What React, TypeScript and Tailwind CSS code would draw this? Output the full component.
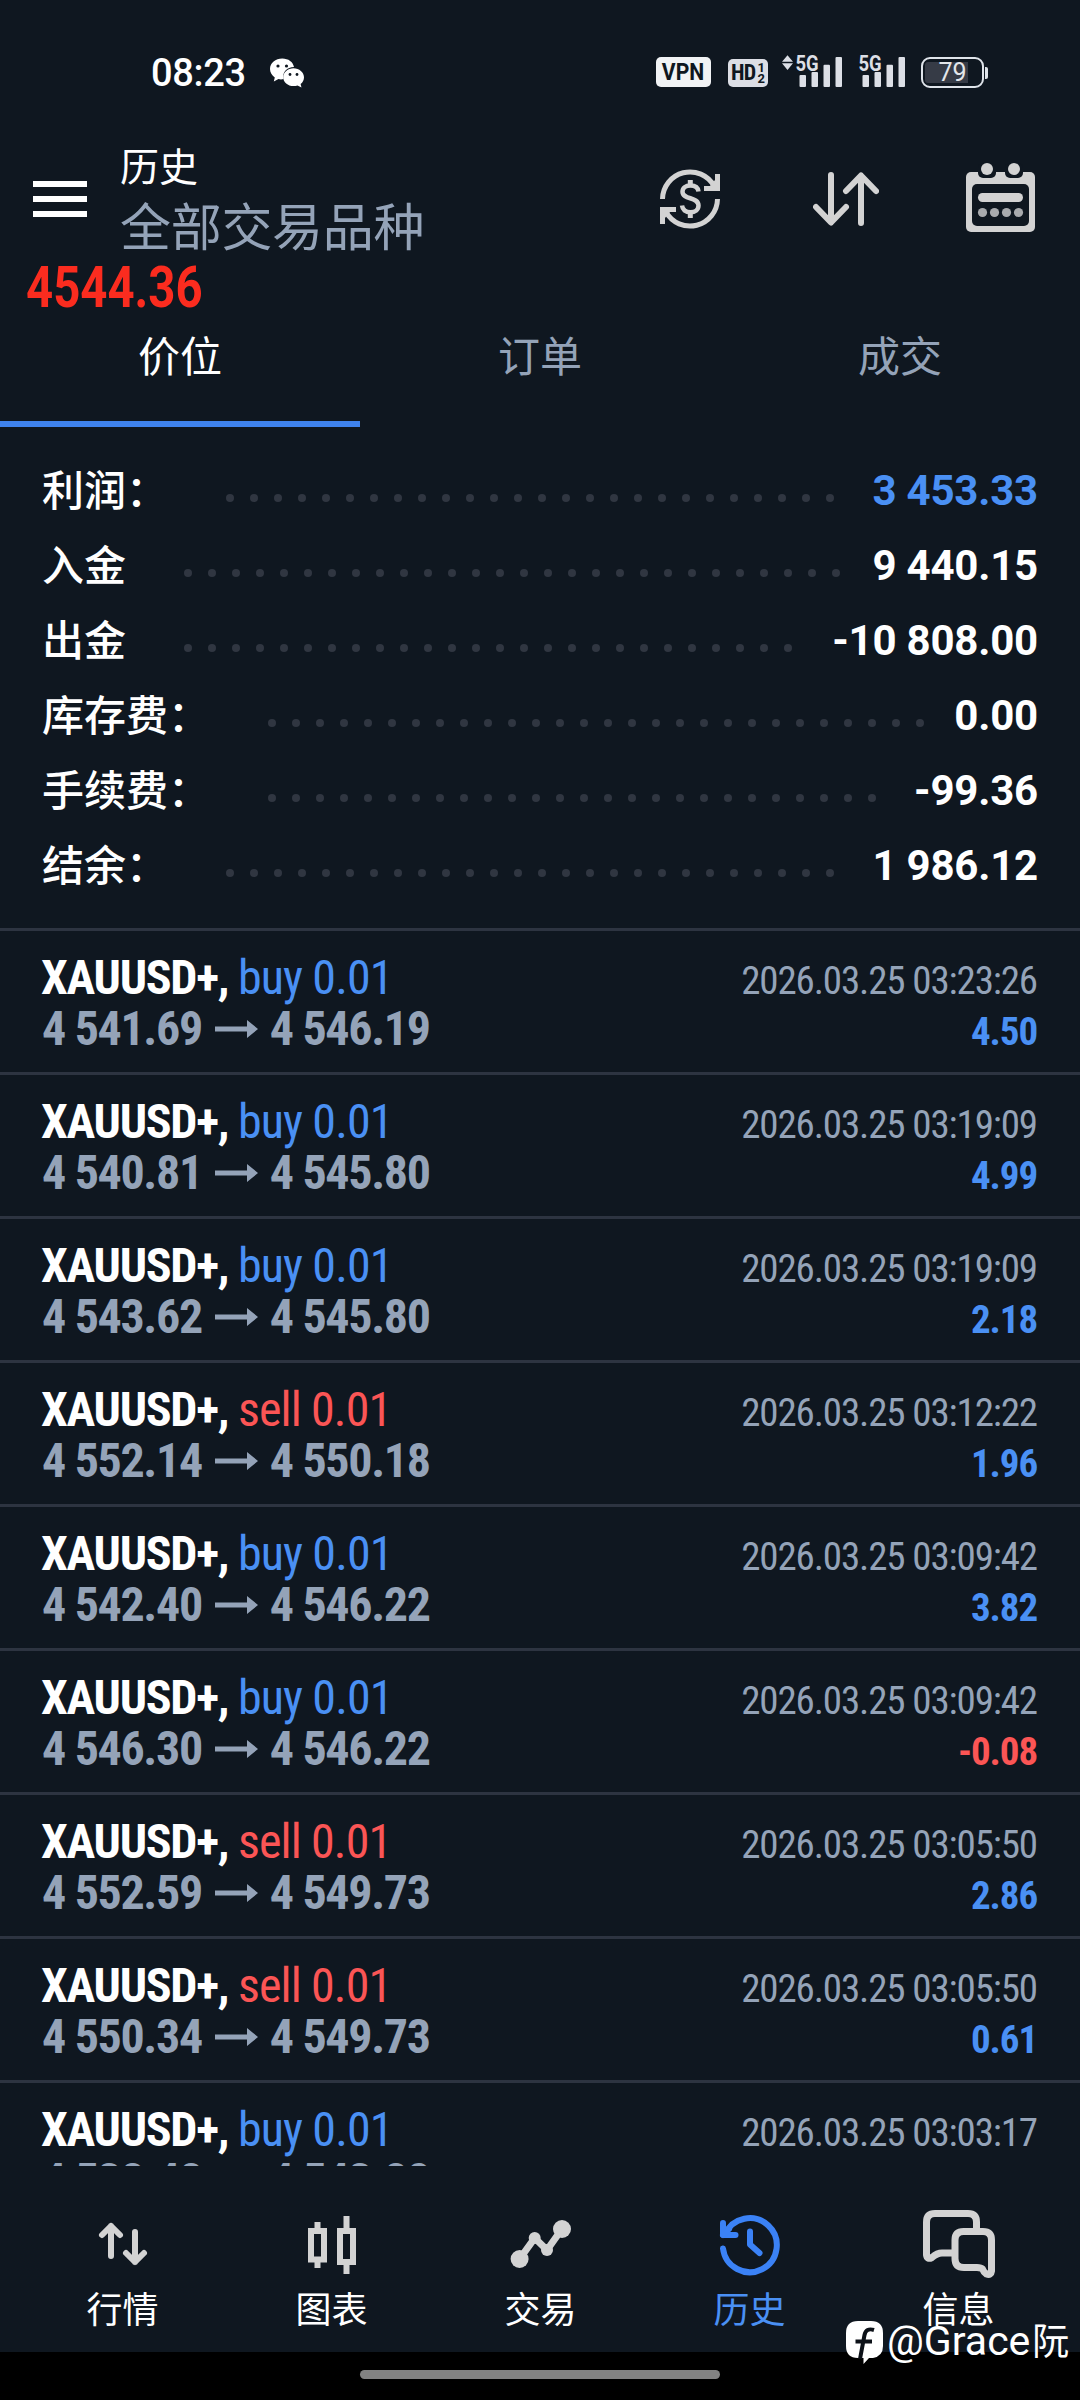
import React from 'react';
import { clsx } from 'clsx';

interface Deal {
  side: 'buy' | 'sell';
  open: string;
  close: string;
  time: string;
  profit: string;
}

interface SummaryItem {
  label: string;
  value: string;
  dots: number;
  highlight?: boolean;
}

const summary: SummaryItem[] = [
  { label: '利润：', value: '3 453.33', dots: 26, highlight: true },
  { label: '入金', value: '9 440.15', dots: 28 },
  { label: '出金', value: '-10 808.00', dots: 26 },
  { label: '库存费：', value: '0.00', dots: 28 },
  { label: '手续费：', value: '-99.36', dots: 26 },
  { label: '结余：', value: '1 986.12', dots: 26 }
];

const deals: Deal[] = [
  { side: 'buy', open: '4 541.69', close: '4 546.19', time: '2026.03.25 03:23:26', profit: '4.50' },
  { side: 'buy', open: '4 540.81', close: '4 545.80', time: '2026.03.25 03:19:09', profit: '4.99' },
  { side: 'buy', open: '4 543.62', close: '4 545.80', time: '2026.03.25 03:19:09', profit: '2.18' },
  { side: 'sell', open: '4 552.14', close: '4 550.18', time: '2026.03.25 03:12:22', profit: '1.96' },
  { side: 'buy', open: '4 542.40', close: '4 546.22', time: '2026.03.25 03:09:42', profit: '3.82' },
  { side: 'buy', open: '4 546.30', close: '4 546.22', time: '2026.03.25 03:09:42', profit: '-0.08' },
  { side: 'sell', open: '4 552.59', close: '4 549.73', time: '2026.03.25 03:05:50', profit: '2.86' },
  { side: 'sell', open: '4 550.34', close: '4 549.73', time: '2026.03.25 03:05:50', profit: '0.61' },
  { side: 'buy', open: '4 538.48', close: '4 543.82', time: '2026.03.25 03:03:17', profit: '5.34' }
];

const Signal: React.FC<{ arrows?: boolean }> = ({ arrows }) => (
  <div className={clsx('relative h-8 shrink-0', arrows ? 'w-[60px]' : 'w-[44px]')}>
    <svg className="absolute right-0 top-0" width="60" height="32" viewBox="0 0 60 32" fill="#dcdfe6">
      {arrows && <path d="M0 6.7 L5.5 0.3 L11 6.7 Z M0 8.3 L5.5 15 L11 8.3 Z" />}
      <rect x="17.5" y="20" width="6.5" height="12" rx="1" />
      <rect x="29.5" y="17" width="6.5" height="15" rx="1" />
      <rect x="41.5" y="9.7" width="6.5" height="22.3" rx="1" />
      <rect x="53.5" y="2" width="6.5" height="30" rx="1" />
    </svg>
    <span className="absolute right-[23.5px] top-[1px] origin-right scale-x-[0.84] text-[22px] leading-[15px] font-bold text-[#dcdfe6]">
      5G
    </span>
  </div>
);

const StatusBar = () => (
  <div className="flex h-[144px] shrink-0 items-start pl-[151px]">
    <span className="mt-[51px] w-[119px] text-[38px] leading-[44px] font-medium tracking-[-0.3px] text-white">08:23</span>
    <svg className="mt-[58px]" width="35" height="30" viewBox="0 0 35 30">
      <path
        d="M12.3 0.5 C5.5 0.5 0 5 0 11 C0 14.5 2 17.5 4.8 19.5 L3.8 23.5 L8.5 21 C10 21.5 12 21.5 13.5 21 C12 14 17 9 24 9 C23 4 18.5 0.5 12.3 0.5 Z"
        fill="#fff"
      />
      <path
        d="M23.5 10.2 C17.8 10.2 13.2 14.2 13.2 19.2 C13.2 24.2 17.8 28 23.5 28 C25 28 26.3 27.8 27.5 27.4 L31.5 29.5 L30.6 26 C32.8 24.3 34 22 34 19.2 C34 14.2 29.2 10.2 23.5 10.2 Z"
        fill="#fff"
      />
      <g fill="#0f1720">
        <circle cx="8" cy="8" r="1.6" />
        <circle cx="16.5" cy="8" r="1.6" />
        <circle cx="20" cy="16.5" r="1.4" />
        <circle cx="27" cy="16.5" r="1.4" />
      </g>
    </svg>
    <div className="mt-[57px] ml-[351px] flex h-[30px] w-[55px] items-center justify-center rounded-[5px] bg-[#f1f3f5] text-[23px] leading-none font-bold text-[#0f1720]">
      <span className="scale-x-[0.92]">VPN</span>
    </div>
    <div className="mt-[59px] ml-[17px] flex h-[28px] w-[40px] items-center justify-center rounded-[5px] bg-[#dcdee5] text-[#0f1720]">
      <span className="text-[22px] leading-[28px] font-bold tracking-[-0.8px] [font-stretch:75%]">HD</span>
      <span className="ml-[2px] flex flex-col text-[13px] leading-[11px] font-bold">
        <span>1</span>
        <span>2</span>
      </span>
    </div>
    <div className="mt-[55px] ml-[14px]">
      <Signal arrows />
    </div>
    <div className="mt-[55px] ml-[19px]">
      <Signal />
    </div>
    <div className="relative mt-[57px] ml-[16px] flex h-[31px] w-[63px] items-center justify-center rounded-[9px] border-2 border-[#dfe4ea]">
      <div className="absolute top-[3px] left-[2px] h-[21px] w-[43px] rounded-l-[3px] bg-[#363b46]" />
      <span className="relative text-[25px] leading-none text-[#e3e6ea]">79</span>
    </div>
    <div className="mt-[67px] ml-[1px] h-[12px] w-[3px] rounded-r-[2px] bg-[#dfe4ea]" />
  </div>
);

const CurrencyIcon = () => (
  <svg width="60" height="60" viewBox="0 0 60 60" fill="none" stroke="#d3d3d3" strokeWidth="5">
    <path d="M2.5 30 A27.5 27.5 0 0 1 54 17" />
    <path d="M57.5 30 A27.5 27.5 0 0 1 6 43" />
    <path d="M60 5 V22 H44 V17 H50 L55 11 V5 Z" fill="#d3d3d3" stroke="none" />
    <path d="M0 55 V38 H16 V43 H10 L5 49 V55 Z" fill="#d3d3d3" stroke="none" />
    <path
      d="M38.5 22.5 C38 18.5 35 16.5 30.5 16.5 C25.5 16.5 22.5 19 22.5 22.7 C22.5 31 38.5 27.5 38.5 36.5 C38.5 40.5 35 43.3 30.5 43.3 C25.5 43.3 22.5 40.5 22 36.5"
      strokeWidth="4.5"
    />
    <path d="M30.3 11 V17 M30.3 43 V49" />
  </svg>
);

const SortIcon = () => (
  <svg
    width="66"
    height="54"
    viewBox="0 0 66 54"
    fill="none"
    stroke="#d3d3d3"
    strokeWidth="6"
    strokeLinecap="round"
    strokeLinejoin="round"
  >
    <path d="M18 3 V50 M3 35 L18 50.5 L33 35" />
    <path d="M48 51 V4 M33 19 L48 3.5 L63 19" />
  </svg>
);

const CalendarIcon = () => (
  <svg width="69" height="69" viewBox="0 0 69 69">
    <rect x="0" y="9" width="69" height="60" rx="5" fill="#d3d3d3" />
    <rect x="12" y="0" width="18" height="15" rx="5" fill="#0f1720" />
    <rect x="39" y="0" width="18" height="15" rx="5" fill="#0f1720" />
    <circle cx="21" cy="6" r="6" fill="#d3d3d3" />
    <circle cx="48" cy="6" r="6" fill="#d3d3d3" />
    <rect x="6" y="21" width="57" height="42" rx="5" fill="#0f1720" />
    <rect x="12" y="30" width="45" height="9" rx="4.5" fill="#d3d3d3" />
    <g fill="#a9abae">
      <circle cx="16.5" cy="49.5" r="4.6" />
      <circle cx="28.5" cy="49.5" r="4.6" />
      <circle cx="40.5" cy="49.5" r="4.6" />
      <circle cx="52.5" cy="49.5" r="4.6" />
    </g>
  </svg>
);

const Header = () => (
  <header className="flex h-[174px] shrink-0 items-start pl-[33px]">
    <div className="mt-[37px] flex w-[54px] flex-col gap-[9px]">
      <div className="h-[6px] bg-white" />
      <div className="h-[6px] bg-white" />
      <div className="h-[6px] bg-white" />
    </div>
    <div className="relative ml-[33px] w-[540px] pt-[1px]">
      <div className="text-[39px] leading-[46px] text-white">历史</div>
      <div className="mt-[8px] text-[51px] leading-[60px] tracking-[-0.3px] text-[#94a3b8]">全部交易品种</div>
      {/* live quote floats under the menu button */}
      <div className="absolute top-[120px] left-[-94px] origin-left scale-x-[0.83] text-[57px] leading-[48px] font-bold text-[#fb2c1f]">
        4544.36
      </div>
    </div>
    <div className="mt-[25px]">
      <CurrencyIcon />
    </div>
    <div className="mt-[28px] ml-[93px]">
      <SortIcon />
    </div>
    <div className="mt-[19px] ml-[87px]">
      <CalendarIcon />
    </div>
  </header>
);

const Tabs = () => (
  <div className="grid h-[109px] shrink-0 grid-cols-3 text-center text-[42px] text-[#94a3b8]">
    <div className="border-b-[6px] border-[#3f83ee] pt-[10px] leading-[60px] text-white">价位</div>
    <div className="pt-[10px] leading-[60px]">订单</div>
    <div className="pt-[10px] leading-[60px]">成交</div>
  </div>
);

const Summary = () => (
  <section className="h-[501px] shrink-0 px-[42px] pt-[26px]">
    {summary.map((item) => (
      <div key={item.label} className="flex h-[75px] items-center text-[42px] text-white">
        <span className="mt-[2px] font-medium">{item.label}</span>
        <div className="mt-[15px] ml-[58px] flex gap-4">
          {Array.from({ length: item.dots }, (_, i) => (
            <span key={i} className="size-2 rounded-full bg-[#303641]" />
          ))}
        </div>
        <span className={clsx('ml-auto font-bold tracking-[-0.2px]', item.highlight && 'text-[#4a90f4]')}>
          {item.value}
        </span>
      </div>
    ))}
  </section>
);

const DealRow: React.FC<{ deal: Deal }> = ({ deal }) => (
  <div className="h-[144px] shrink-0 border-t-[3px] border-[#2d3441] pt-[21px] pr-[43px] pl-[41px] whitespace-nowrap [font-stretch:75%]">
    <div className="flex h-[51px] items-baseline justify-between leading-[51px]">
      <div className="text-[48px]">
        <span className="font-bold tracking-[-0.027em] text-white">XAUUSD+, </span>
        <span className={clsx('tracking-[-0.018em]', deal.side === 'buy' ? 'text-[#4a90f4]' : 'text-[#fb5555]')}>
          {deal.side} 0.01
        </span>
      </div>
      <span className="text-[39px] tracking-[-0.029em] text-[#94a3b8]">{deal.time}</span>
    </div>
    <div className="flex h-[51px] items-baseline justify-between pl-px leading-[51px] font-bold">
      <div className="text-[48px] tracking-[-0.028em] text-[#94a3b8]">
        {deal.open}
        <svg className="mr-[12px] ml-[13px] inline-block align-[7px]" width="43" height="18" viewBox="0 0 43 18" fill="#94a3b8">
          <path d="M0 6.5 H32 V0 L43 9 L32 18 V11.5 H0 Z" />
        </svg>
        {deal.close}
      </div>
      <span
        className={clsx(
          'text-[39px] tracking-[-0.028em]',
          deal.profit.startsWith('-') ? 'text-[#fb5555]' : 'text-[#4a90f4]'
        )}
      >
        {deal.profit}
      </span>
    </div>
  </div>
);

const QuotesIcon = () => (
  <svg
    width="72"
    height="72"
    viewBox="86 2208 72 72"
    fill="none"
    stroke="#d3d3d3"
    strokeWidth="6"
    strokeLinecap="round"
    strokeLinejoin="round"
  >
    <path d="M110 2226 V2256 M101 2235 L110 2226 L119 2235" />
    <path d="M134 2232 V2262 M125 2253 L134 2262 L143 2253" />
  </svg>
);

const ChartIcon = () => (
  <svg width="72" height="72" viewBox="295 2208 72 72" fill="none" stroke="#d3d3d3" strokeWidth="6">
    <path d="M310 2231 H323 V2259.5 H310 Z M316.5 2222 V2231 M316.5 2259 V2268" />
    <path d="M339 2231 H352 V2262 H339 Z M345.5 2216 V2231 M345.5 2262 V2274" />
  </svg>
);

const TradeIcon = () => (
  <svg width="72" height="72" viewBox="504 2208 72 72" fill="#d3d3d3">
    <path d="M518.6 2259 L533.7 2238 L546 2250 L561 2229" fill="none" stroke="#d3d3d3" strokeWidth="7" />
    <circle cx="518.6" cy="2259" r="9" />
    <circle cx="533.7" cy="2238" r="6" />
    <circle cx="546" cy="2250" r="6" />
    <circle cx="561" cy="2229" r="9" />
  </svg>
);

const HistoryIcon = () => (
  <svg
    width="72"
    height="72"
    viewBox="713 2208 72 72"
    fill="none"
    stroke="#3b82f6"
    strokeWidth="6"
    strokeLinecap="round"
    strokeLinejoin="round"
  >
    <path d="M722 2248.5 A27 27 0 1 0 724 2234.5" />
    <path d="M722 2223 V2235 H734.5" />
    <path d="M722 2235 L728 2229" />
    <path d="M749 2231.5 V2244.5 L758.5 2253" />
  </svg>
);

const MessagesIcon = () => (
  <svg width="72" height="72" viewBox="922 2208 72 72" fill="none" stroke="#d3d3d3" strokeWidth="7" strokeLinejoin="round">
    <path d="M975.5 2229 V2222 Q975.5 2213.5 967 2213.5 H934 Q925.5 2213.5 925.5 2222 V2255 Q926 2260 931 2257.5 Q936 2253 941 2253 H951" />
    <path d="M962.5 2231.5 H982 Q990.5 2231.5 990.5 2240 V2271 Q990 2275.5 985.5 2274 Q982.5 2272 981.5 2269 Q980 2267.5 976 2267.5 H963 Q954 2267.5 954 2258.5 V2240 Q954 2231.5 962.5 2231.5 Z" />
  </svg>
);

const navItems = [
  { label: '行情', icon: QuotesIcon },
  { label: '图表', icon: ChartIcon },
  { label: '交易', icon: TradeIcon },
  { label: '历史', icon: HistoryIcon, active: true },
  { label: '信息', icon: MessagesIcon }
];

const BottomNav = () => (
  <nav className="grid h-[186px] shrink-0 grid-cols-5 pt-[42px] pr-[17px] pl-[18px]">
    {navItems.map(({ label, icon: Icon, active }) => (
      <div key={label} className="flex flex-col items-center">
        <Icon />
        <span className={clsx('mt-[9px] text-[36px] leading-[44px]', active ? 'text-[#4a90f4]' : 'text-white')}>
          {label}
        </span>
      </div>
    ))}
  </nav>
);

const Watermark = () => (
  <div className="absolute top-[2319px] left-[846px] flex items-start text-white">
    <svg className="mt-[2px]" width="37" height="44" viewBox="0 0 37 44">
      <path
        d="M12 0 H25 Q37 0 37 12 V25 Q37 35 27 37 H23 L17.5 43 V37 H12 Q0 37 0 25 V12 Q0 0 12 0 Z"
        fill="#fff"
      />
      <path d="M28 9 Q20 6.5 18.5 14 L14 38 M9.5 20.5 H26" fill="none" stroke="#0c1118" strokeWidth="4" />
    </svg>
    <span className="ml-[4px] text-[41px] leading-[44px] whitespace-nowrap">
      @Grace<span className="ml-[2px] text-[37px]">阮</span>
    </span>
  </div>
);

const App = () => (
  <div className="relative flex h-[2400px] w-[1080px] flex-col overflow-hidden bg-[#0f1720] font-['Roboto','Noto_Sans_CJK_SC',sans-serif]">
    <StatusBar />
    <Header />
    <Tabs />
    <Summary />
    <main className="flex h-[1238px] shrink-0 flex-col overflow-hidden">
      {deals.map((deal, i) => (
        <DealRow key={i} deal={deal} />
      ))}
    </main>
    <BottomNav />
    <div className="flex h-[48px] shrink-0 justify-center bg-black pt-[18px]">
      <div className="h-[9px] w-[360px] rounded-full bg-[#828282]" />
    </div>
    <Watermark />
  </div>
);

export default App;
